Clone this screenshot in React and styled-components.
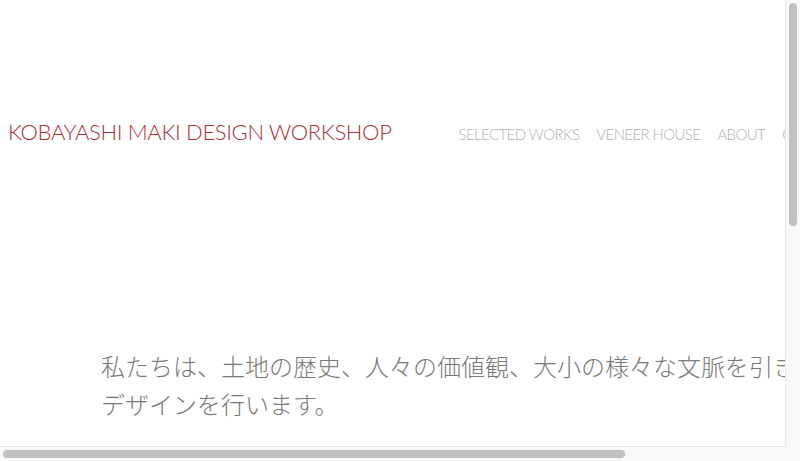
import React from "react";
import styled, { createGlobalStyle } from "styled-components";

const GlobalStyle = createGlobalStyle`
  html, body {
    margin: 0;
    padding: 0;
    background: #fff;
    overflow: hidden;
  }
`;

// window frame: page area plus the two scroll bars and their corner
const Frame = styled.div`
  display: grid;
  grid-template-columns: 1fr 15px;
  grid-template-rows: 1fr 15px;
  width: 100vw;
  height: 100vh;
  background: #fff;
`;

const Screen = styled.div`
  overflow: hidden;
  min-width: 0;
  min-height: 0;
`;

const Track = styled.div`
  box-sizing: border-box;
  background: #f8f8f8;
  display: flex;
  flex-direction: ${(p) => (p.$vertical ? "column" : "row")};
  padding: ${(p) => (p.$vertical ? "3px 3px 3px 3px" : "3px 3px 3px 3px")};
  ${(p) =>
    p.$vertical
      ? "border-left: 1px solid #e6e6e6;"
      : "border-top: 1px solid #e6e6e6;"}
`;

const Thumb = styled.div`
  flex: none;
  background: #c1c1c1;
  border-radius: 5px;
`;

const Corner = styled.div`
  background: #f8f8f8;
`;

const Page = styled.div`
  width: 980px;
  font-family: "Lato", "Liberation Sans", sans-serif;
`;

const Header = styled.header`
  display: flex;
  align-items: baseline;
  padding: 118px 0 0 8px;
`;

const Logo = styled.a`
  font-size: 22px;
  font-weight: 300;
  letter-spacing: -0.35px;
  color: #ad3036;
  text-decoration: none;
  white-space: nowrap;
`;

const Nav = styled.nav`
  display: flex;
  gap: 17px;
  margin-left: 67px;
`;

const NavLink = styled.a`
  font-size: 15px;
  font-weight: 300;
  letter-spacing: -0.6px;
  color: #b2b2b2;
  text-decoration: none;
  white-space: nowrap;
`;

const Intro = styled.section`
  padding: 202px 0 0 101px;
`;

const Statement = styled.p`
  margin: 0;
  font-family: "Noto Sans CJK JP", sans-serif;
  font-size: 24px;
  font-weight: 300;
  line-height: 38px;
  color: #7a7a7a;
  white-space: nowrap;
`;

const links = ["SELECTED WORKS", "VENEER HOUSE", "ABOUT", "CONTACT"];

export default function App() {
  return (
    <>
      <GlobalStyle />
      <Frame>
        <Screen>
          <Page>
            <Header>
              <Logo href="#">KOBAYASHI MAKI DESIGN WORKSHOP</Logo>
              <Nav>
                {links.map((l) => (
                  <NavLink key={l} href="#">
                    {l}
                  </NavLink>
                ))}
              </Nav>
            </Header>
            <Intro>
              <Statement>
                私たちは、土地の歴史、人々の価値観、大小の様々な文脈を引き出し、
                <br />
                デザインを行います。
              </Statement>
            </Intro>
          </Page>
        </Screen>
        <Track $vertical>
          <Thumb style={{ height: 223, width: 8 }} />
        </Track>
        <Track>
          <Thumb style={{ width: 622, height: 8 }} />
        </Track>
        <Corner />
      </Frame>
    </>
  );
}
